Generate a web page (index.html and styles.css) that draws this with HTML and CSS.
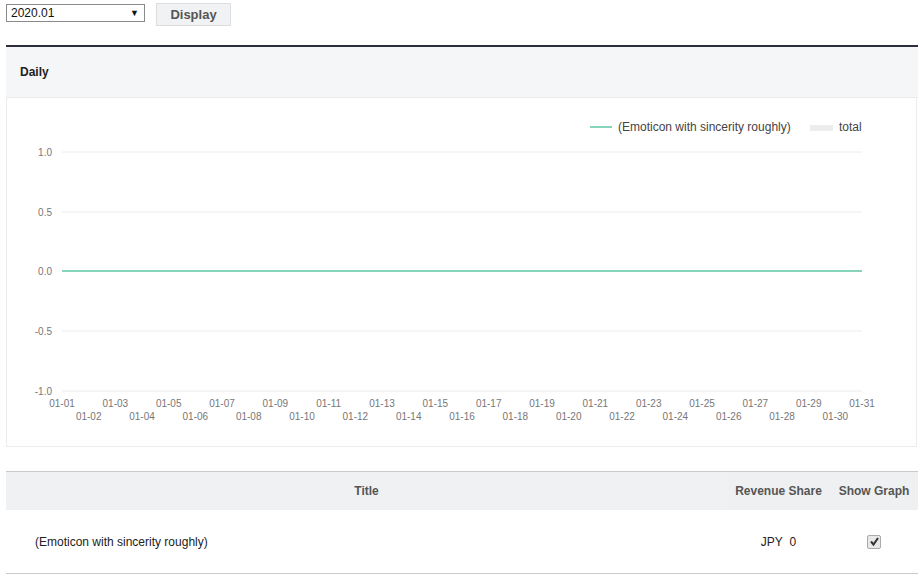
FILE: index.html
```html
<!DOCTYPE html>
<html>
<head>
<meta charset="utf-8">
<link rel="stylesheet" href="styles.css">
</head>
<body>
<div class="toolbar">
  <div class="select"><span>2020.01</span><span class="arrow">▼</span></div>
  <button class="btn">Display</button>
</div>

<section class="panel">
  <div class="panel-head">Daily</div>
  <div class="chart">
    <svg width="909" height="347" viewBox="0 0 909 347">
      <g class="legend">
        <line x1="583" y1="29" x2="605" y2="29" class="series"/>
        <text x="611" y="33">(Emoticon with sincerity roughly)</text>
        <rect x="803" y="27" width="23" height="6" class="total-swatch"/>
        <text x="832" y="33">total</text>
      </g>
      <g class="grid">
        <line x1="55" y1="54" x2="855" y2="54"/>
        <line x1="55" y1="114" x2="855" y2="114"/>
        <line x1="55" y1="173" x2="855" y2="173"/>
        <line x1="55" y1="233" x2="855" y2="233"/>
        <line x1="55" y1="293" x2="855" y2="293"/>
      </g>
      <g class="ylab">
        <text x="45" y="58">1.0</text>
        <text x="45" y="118">0.5</text>
        <text x="45" y="177">0.0</text>
        <text x="45" y="237">-0.5</text>
        <text x="45" y="297">-1.0</text>
      </g>
      <line x1="55" y1="173" x2="855" y2="173" class="series"/>
      <g class="xlab">
        <text x="55" y="309">01-01</text>
        <text x="81.67" y="322">01-02</text>
        <text x="108.33" y="309">01-03</text>
        <text x="135" y="322">01-04</text>
        <text x="161.67" y="309">01-05</text>
        <text x="188.33" y="322">01-06</text>
        <text x="215" y="309">01-07</text>
        <text x="241.67" y="322">01-08</text>
        <text x="268.33" y="309">01-09</text>
        <text x="295" y="322">01-10</text>
        <text x="321.67" y="309">01-11</text>
        <text x="348.33" y="322">01-12</text>
        <text x="375" y="309">01-13</text>
        <text x="401.67" y="322">01-14</text>
        <text x="428.33" y="309">01-15</text>
        <text x="455" y="322">01-16</text>
        <text x="481.67" y="309">01-17</text>
        <text x="508.33" y="322">01-18</text>
        <text x="535" y="309">01-19</text>
        <text x="561.67" y="322">01-20</text>
        <text x="588.33" y="309">01-21</text>
        <text x="615" y="322">01-22</text>
        <text x="641.67" y="309">01-23</text>
        <text x="668.33" y="322">01-24</text>
        <text x="695" y="309">01-25</text>
        <text x="721.67" y="322">01-26</text>
        <text x="748.33" y="309">01-27</text>
        <text x="775" y="322">01-28</text>
        <text x="801.67" y="309">01-29</text>
        <text x="828.33" y="322">01-30</text>
        <text x="855" y="309">01-31</text>
      </g>
    </svg>
  </div>
</section>

<table class="data">
  <thead>
    <tr><th class="c-title">Title</th><th class="c-rev">Revenue Share</th><th class="c-graph">Show Graph</th></tr>
  </thead>
  <tbody>
    <tr>
      <td class="name">(Emoticon with sincerity roughly)</td>
      <td class="rev">JPY&nbsp;&nbsp;0</td>
      <td class="graph"><span class="check"><svg width="11" height="11" viewBox="0 0 11 11"><path d="M2 5.5 L4.5 8.5 L9 2" fill="none" stroke="#333" stroke-width="2"/></svg></span></td>
    </tr>
  </tbody>
</table>
</body>
</html>
```

FILE: styles.css
```css
html, body { margin: 0; padding: 0; background: #fff; }
body {
  padding: 3px 4px 0 6px;
  font-family: "Liberation Sans", Arial, sans-serif;
  color: #333;
}
.toolbar {
  display: flex;
  align-items: flex-start;
  gap: 11px;
  height: 23px;
}
.select {
  margin-top: 1px;
  box-sizing: border-box;
  width: 139px;
  height: 18px;
  border: 1px solid #8a8a8a;
  display: flex;
  align-items: center;
  justify-content: space-between;
  padding: 0 5px 0 4px;
  font-size: 12px;
  color: #111;
}
.select .arrow { font-size: 9px; color: #111; }
.btn {
  box-sizing: border-box;
  width: 75px;
  height: 23px;
  border: 1px solid #dcdde0;
  background: #f1f2f4;
  font-family: "Liberation Sans", Arial, sans-serif;
  font-weight: bold;
  font-size: 13px;
  color: #555;
  padding: 0;
}
.panel {
  margin-top: 19px;
  width: 912px;
  border-top: 2px solid #2c2e3b;
}
.panel-head {
  background: #f5f6f8;
  height: 51px;
  box-sizing: border-box;
  border-bottom: 1px solid #e9eaec;
  display: flex;
  align-items: center;
  padding-left: 14px;
  font-size: 12px;
  font-weight: bold;
  color: #222;
}
.chart {
  width: 911px;
  box-sizing: border-box;
  border: 1px solid #ececec;
  border-top: none;
  height: 349px;
}
.chart svg { display: block; }
.grid line { stroke: #ececec; stroke-width: 1; }
.series { stroke: #85d4bb; stroke-width: 2; }
.total-swatch { fill: #ededed; }
.legend text { font-size: 12px; fill: #444; }
.ylab text { font-size: 10px; fill: #777; text-anchor: end; }
.xlab text { font-size: 10px; fill: #777; text-anchor: middle; }

.data {
  margin-top: 24px;
  width: 912px;
  border-collapse: collapse;
  border-top: 1px solid #c9cacc;
  border-bottom: 1px solid #c9cacc;
  font-size: 12px;
}
.data th {
  background: #eef0f2;
  height: 38px;
  padding: 0;
  font-weight: bold;
  color: #555;
}
.data th.c-title { background: #f0f1f3; }
.c-rev { width: 103px; }
.c-graph { width: 88px; }
.data td {
  height: 63px;
  padding: 0;
  color: #222;
}
.data td.name { padding-left: 29px; }
.data td.rev { text-align: center; }
.data td.graph { text-align: center; }
.check {
  display: inline-flex;
  align-items: center;
  justify-content: center;
  width: 12px;
  height: 12px;
  border: 1px solid #aaa;
  background: #e8e8e8;
  border-radius: 2px;
  vertical-align: middle;
}
```
